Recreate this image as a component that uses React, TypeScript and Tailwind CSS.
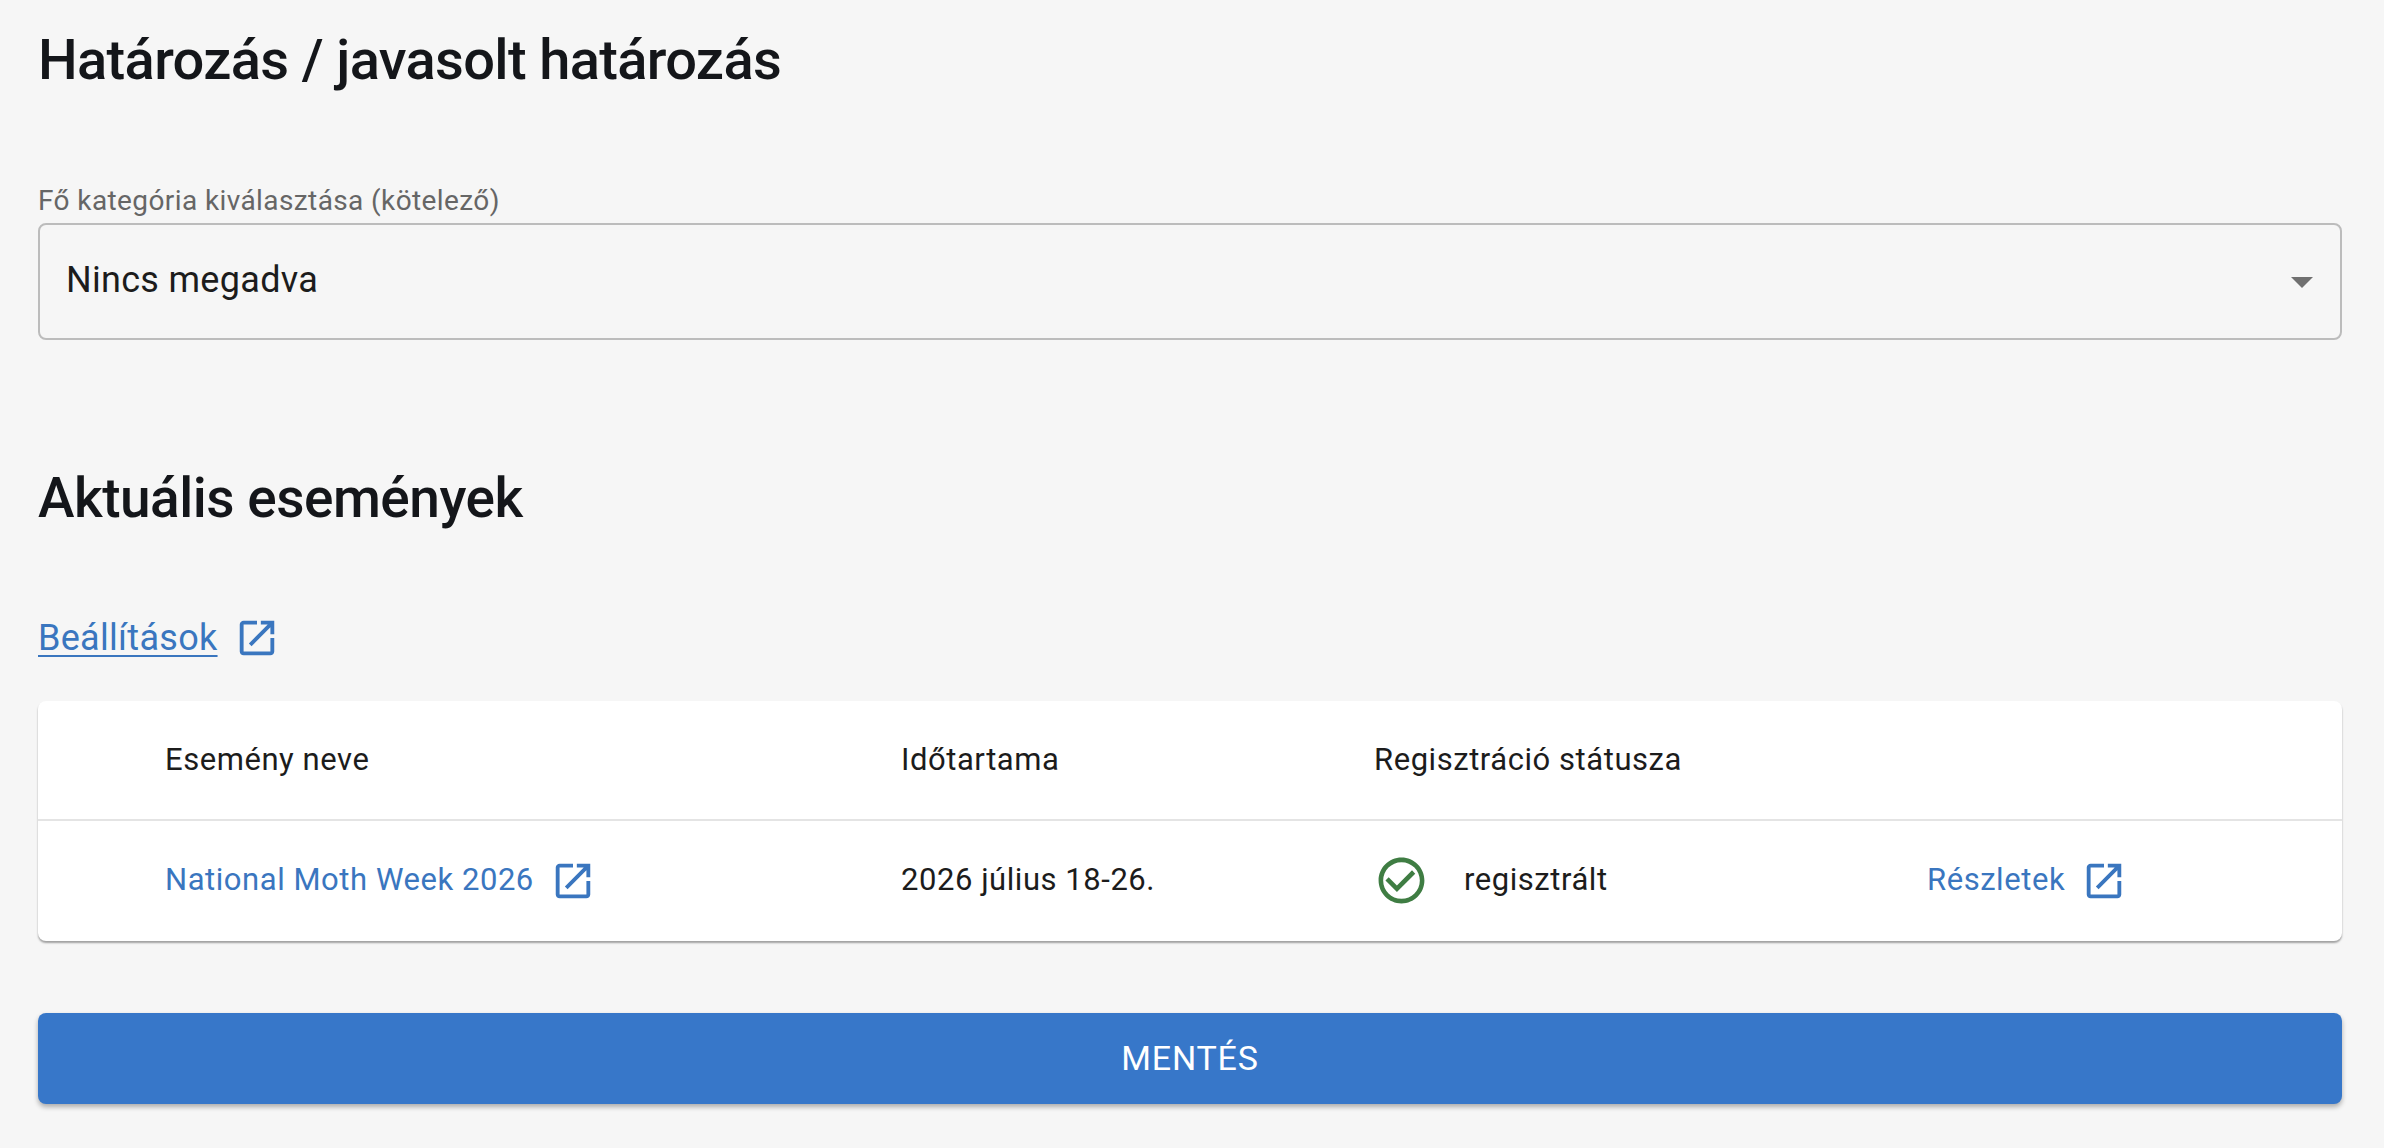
import React from 'react';

const OpenInNew = ({ className = '' }: { className?: string }) => (
  <svg viewBox="0 0 24 24" fill="currentColor" className={className}>
    <path d="M19 19H5V5h7V3H5c-1.11 0-2 .9-2 2v14c0 1.1.89 2 2 2h14c1.1 0 2-.9 2-2v-7h-2v7zM14 3v2h3.59l-9.83 9.83 1.41 1.41L19 6.41V10h2V3h-7z" />
  </svg>
);

const CheckCircle = ({ className = '' }: { className?: string }) => (
  <svg viewBox="0 0 24 24" fill="currentColor" className={className}>
    <path d="M16.59 7.58 10 14.17l-3.59-3.58L5 12l5 5 8-8zM12 2C6.48 2 2 6.48 2 12s4.48 10 10 10 10-4.48 10-10S17.52 2 12 2zm0 18c-4.42 0-8-3.58-8-8s3.58-8 8-8 8 3.58 8 8-3.58 8-8 8z" />
  </svg>
);

const App: React.FC = () => {
  return (
    <div className="h-[1148px] overflow-hidden bg-[#f6f6f6] pl-[38px] pr-[42px] pt-[24px] font-['Roboto',sans-serif] text-[#14161a]">
      <h1 className="text-[56px] leading-[72px] font-medium tracking-[-0.65px]">Határozás / javasolt határozás</h1>

      <label className="mt-[90px] block text-[28px] leading-[30px] tracking-[0.4px] text-[#666666]">
        Fő kategória kiválasztása (kötelező)
      </label>
      <div className="mt-[7px] flex h-[117px] items-center justify-between rounded-[8px] border-2 border-[#bcbcbc] pl-[26px] pr-[27px]">
        <span className="mb-[3px] text-[36px] tracking-[0.3px] text-[#1c1c1c]">Nincs megadva</span>
        <span className="mt-[2px] h-0 w-0 border-x-[11px] border-t-[11px] border-x-transparent border-t-[#707070]" />
      </div>

      <h2 className="mt-[122px] text-[55px] leading-[72px] font-medium tracking-[-0.5px]">Aktuális események</h2>

      <div className="mt-[81px] flex h-[46px] items-center gap-[16px] text-[#3a76bf]">
        <a className="text-[36px] tracking-[0.3px] underline underline-offset-[5px] decoration-2">Beállítások</a>
        <OpenInNew className="h-[46px] w-[46px]" />
      </div>

      <div className="mt-[40px] rounded-[8px] bg-white text-[31px] tracking-[0.55px] text-[#1c1c1c] shadow-[0_2px_2px_rgba(0,0,0,0.35)]">
        <div className="grid h-[120px] grid-cols-[736px_473px_553px_1fr] items-center border-b-2 border-[#e4e4e4] pl-[127px]">
          <span>Esemény neve</span>
          <span>Időtartama</span>
          <span>Regisztráció státusza</span>
          <span />
        </div>
        <div className="grid h-[120px] grid-cols-[736px_473px_553px_1fr] items-center pb-[1px] pl-[127px]">
          <span className="flex items-center gap-[16px] text-[#3a76bf]">
            National Moth Week 2026
            <OpenInNew className="h-[46px] w-[46px]" />
          </span>
          <span>2026 július 18-26.</span>
          <span className="flex items-center gap-[35px]">
            <CheckCircle className="h-[55px] w-[55px] text-[#3f7d43]" />
            regisztrált
          </span>
          <span className="flex items-center gap-[16px] text-[#3a76bf]">
            Részletek
            <OpenInNew className="h-[46px] w-[46px]" />
          </span>
        </div>
      </div>

      <button className="mt-[72px] flex h-[91px] w-full items-center justify-center rounded-[8px] bg-[#3777c9] text-[34px] tracking-[0.8px] text-white shadow-[0_3px_5px_rgba(0,0,0,0.3)]">
        MENTÉS
      </button>
    </div>
  );
};

export default App;
